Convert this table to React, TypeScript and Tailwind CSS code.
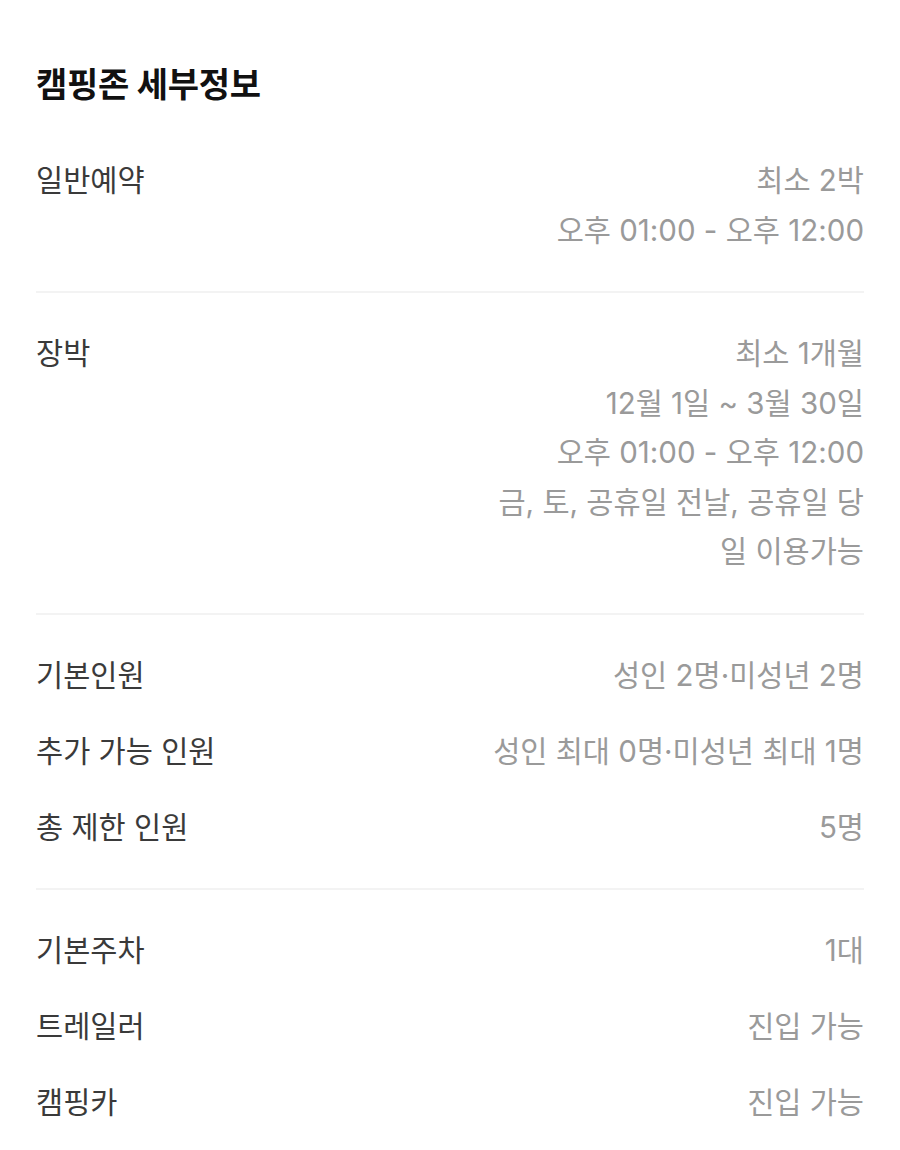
const font = { fontFamily: 'Inter, "Noto Sans CJK KR", sans-serif' };

interface IRow {
  label: string;
  values: string[];
}

const sections: IRow[][] = [
  [{ label: "일반예약", values: ["최소 2박", "오후 01:00 - 오후 12:00"] }],
  [
    {
      label: "장박",
      values: [
        "최소 1개월",
        "12월 1일 ~ 3월 30일",
        "오후 01:00 - 오후 12:00",
        "금, 토, 공휴일 전날, 공휴일 당일 이용가능",
      ],
    },
  ],
  [
    { label: "기본인원", values: ["성인 2명·미성년 2명"] },
    { label: "추가 가능 인원", values: ["성인 최대 0명·미성년 최대 1명"] },
    { label: "총 제한 인원", values: ["5명"] },
  ],
  [
    { label: "기본주차", values: ["1대"] },
    { label: "트레일러", values: ["진입 가능"] },
    { label: "캠핑카", values: ["진입 가능"] },
  ],
];

function Row({ label, values }: IRow) {
  return (
    <div className="flex justify-between gap-6 text-[29.5px] leading-[49.5px]">
      <span className="shrink-0 text-[#3a3a3a]">{label}</span>
      <div className="max-w-[378px] text-right text-[#9a9a9a]">
        {values.map((v) => (
          <p key={v}>{v}</p>
        ))}
      </div>
    </div>
  );
}

export default function App() {
  return (
    <div className="min-h-[1150px] bg-white px-9 pt-[65px]" style={font}>
      <h2 className="text-[34px] leading-[40px] font-bold text-[#111] tracking-[-0.3px]">
        캠핑존 세부정보
      </h2>

      <div className="mt-[15px]">
        {sections.map((rows, i) => (
          <div
            key={i}
            className={
              "flex flex-col gap-[26.5px] py-9 " +
              (i < sections.length - 1 ? "border-b-2 border-[#f3f3f3]" : "")
            }
          >
            {rows.map((row) => (
              <Row key={row.label} {...row} />
            ))}
          </div>
        ))}
      </div>
    </div>
  );
}
